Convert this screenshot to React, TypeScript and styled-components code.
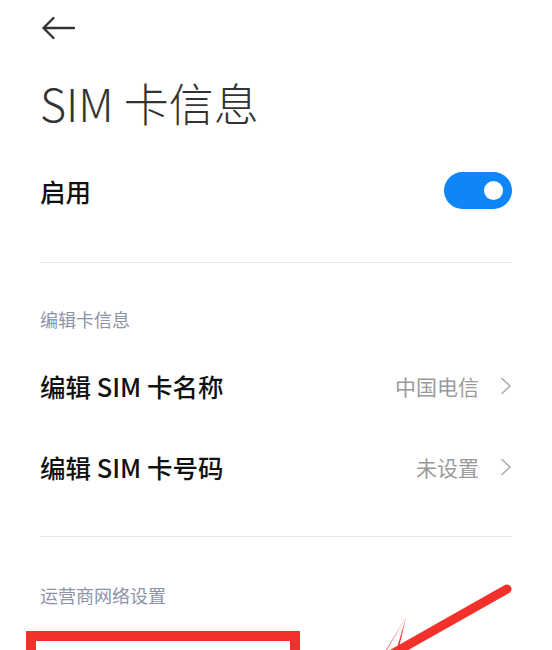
import styled, { createGlobalStyle } from 'styled-components';

const GlobalStyle = createGlobalStyle`
  html, body {
    margin: 0;
    padding: 0;
    background: #ffffff;
    overflow: hidden;
  }
  body {
    font-family: "Noto Sans CJK SC", "Noto Sans", sans-serif;
  }
`;

const Screen = styled.div`
  position: relative;
  width: 552px;
  height: 650px;
  overflow: hidden;
  background: #ffffff;
`;

const Page = styled.div`
  padding: 0 40px;
  display: flex;
  flex-direction: column;
`;

const TopBar = styled.div`
  height: 56px;
  display: flex;
  align-items: center;
`;

const BackButton = styled.button`
  border: none;
  background: none;
  padding: 0;
  margin-left: 1px;
  display: flex;
  cursor: pointer;
`;

const Title = styled.h1`
  margin: 22px 0 22px;
  font-size: 45px;
  line-height: 50px;
  font-weight: 300;
  color: #333333;
`;

const Row = styled.div<{ $height?: number }>`
  height: ${(p) => p.$height ?? 81}px;
  display: flex;
  align-items: center;
  justify-content: space-between;
`;

const RowLabel = styled.span`
  font-size: 25.5px;
  font-weight: 500;
  color: #111111;
`;

const RowRight = styled.div`
  display: flex;
  align-items: center;
  gap: 21px;
`;

const RowValue = styled.span`
  font-size: 21px;
  color: #9a9a9a;
`;

const Divider = styled.hr<{ $top: number }>`
  border: none;
  height: 1px;
  background: #e6e6e6;
  margin: ${(p) => p.$top}px 0 0;
`;

const SectionHeader = styled.div<{ $top: number; $bottom: number }>`
  margin: ${(p) => p.$top}px 0 ${(p) => p.$bottom}px;
  font-size: 18px;
  line-height: 24px;
  color: #8c92a8;
`;

const Toggle = styled.div<{ $on: boolean }>`
  width: 68px;
  height: 37px;
  border-radius: 19px;
  background: ${(p) => (p.$on ? '#0f86f7' : '#d9d9d9')};
  display: flex;
  align-items: center;
  justify-content: ${(p) => (p.$on ? 'flex-end' : 'flex-start')};
  padding: 0 9px;
  box-sizing: border-box;
`;

const Knob = styled.span`
  width: 19px;
  height: 19px;
  border-radius: 50%;
  background: #ffffff;
`;

const Highlight = styled.div`
  margin-left: -14px;
  width: 248px;
  height: 80px;
  border: 10px solid #f3302a;
  padding: 4px 0 0 6px;
  box-sizing: content-box;
  font-size: 25.5px;
  font-weight: 500;
  color: #111111;
  line-height: 34px;
  white-space: nowrap;
  overflow: hidden;
`;

const AnnotationLayer = styled.svg`
  position: absolute;
  left: 0;
  top: 0;
  pointer-events: none;
`;

const Chevron = () => (
  <svg width="12" height="18" viewBox="0 0 12 18">
    <path d="M2 1.5 L10 9 L2 16.5" fill="none" stroke="#ababab" strokeWidth="1.6" strokeLinecap="round" strokeLinejoin="round" />
  </svg>
);

const BackArrow = () => (
  <svg width="34" height="24" viewBox="0 0 34 24">
    <path d="M33 12 H2.5 M12.5 2 L2.5 12 L12.5 22" fill="none" stroke="#333" strokeWidth="2.4" strokeLinecap="round" strokeLinejoin="round" />
  </svg>
);

const rows = [
  { label: '编辑 SIM 卡名称', value: '中国电信' },
  { label: '编辑 SIM 卡号码', value: '未设置' },
];

export default function App() {
  return (
    <Screen>
      <GlobalStyle />
      <Page>
        <TopBar>
          <BackButton aria-label="返回">
            <BackArrow />
          </BackButton>
        </TopBar>
        <Title>SIM 卡信息</Title>
        <Row $height={80}>
          <RowLabel>启用</RowLabel>
          <Toggle $on>
            <Knob />
          </Toggle>
        </Row>
        <Divider $top={32} />
        <SectionHeader $top={44} $bottom={14}>编辑卡信息</SectionHeader>
        {rows.map((r) => (
          <Row key={r.label}>
            <RowLabel>{r.label}</RowLabel>
            <RowRight>
              <RowValue>{r.value}</RowValue>
              <Chevron />
            </RowRight>
          </Row>
        ))}
        <Divider $top={29} />
        <SectionHeader $top={46} $bottom={24}>运营商网络设置</SectionHeader>
        <Highlight>接入点名称 (APN)</Highlight>
      </Page>
      <AnnotationLayer width="552" height="650" viewBox="0 0 552 650">
        <line x1="507" y1="589" x2="385" y2="658" stroke="#f3302a" strokeWidth="9" strokeLinecap="round" />
        <polygon points="406,617 398,652 360,690 395,655" fill="#f3302a" />
        <polygon points="406,617 380,662 362,690" fill="#f3302a" />
      </AnnotationLayer>
    </Screen>
  );
}
